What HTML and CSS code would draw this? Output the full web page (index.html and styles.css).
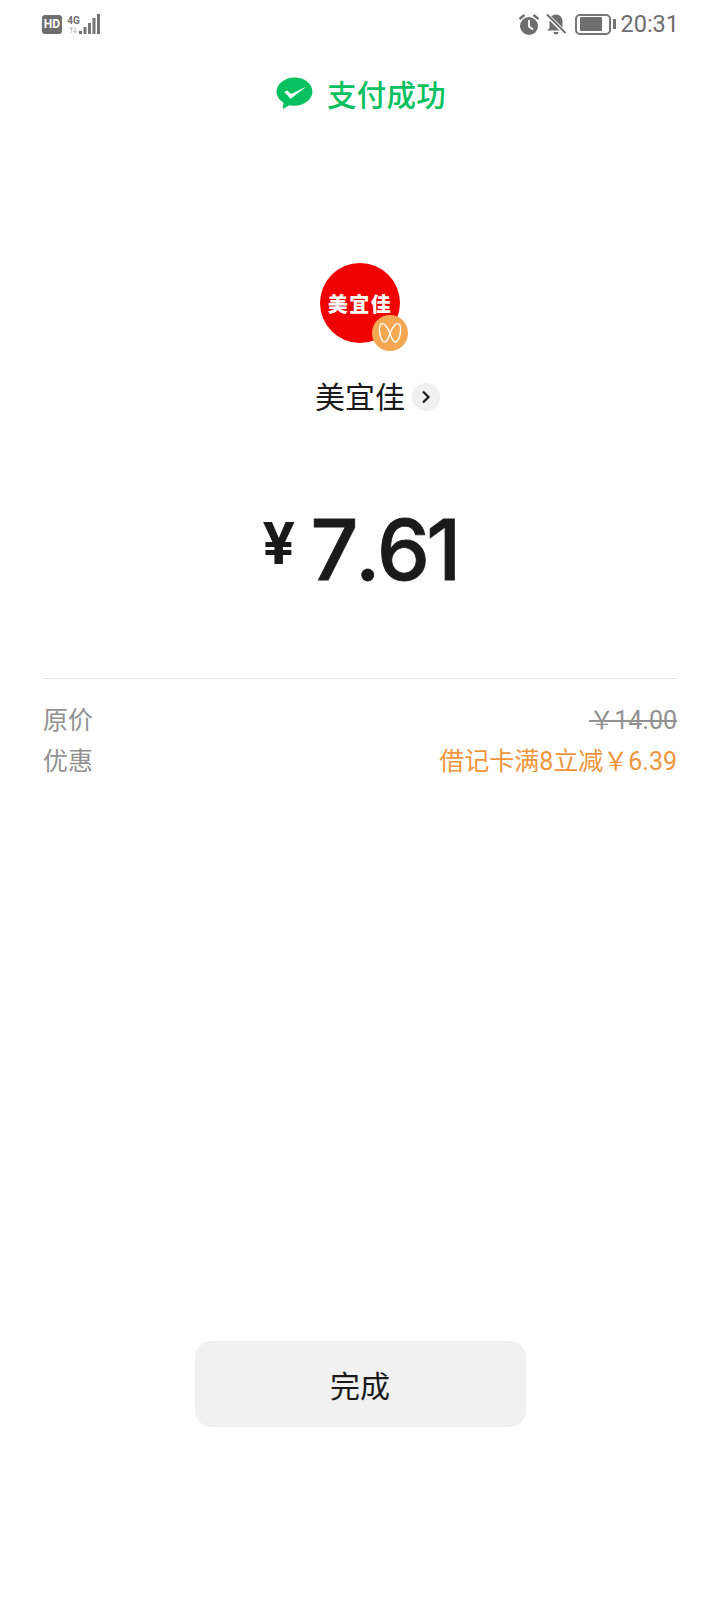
FILE: index.html
```html
<!DOCTYPE html>
<html lang="zh-CN">
<head>
    <meta charset="UTF-8">
    <title>支付成功</title>
    <meta name="viewport" content="width=device-width, initial-scale=1.0">
    <link rel="stylesheet" href="styles.css">
</head>
<body>
<div class="status-bar">
    <div class="status-left">
        <span class="hd-badge">HD</span>
        <div class="net">
            <span class="net-label">4G</span>
            <svg class="net-arrows" width="12" height="8" viewBox="0 0 12 8"><path d="M3 0.500v7M1 2.500l2-2 2 2M8 0.500v7M6 5.500l2 2 2-2" fill="none" stroke="#c4c4c4" stroke-width="1.400"/></svg>
        </div>
        <svg class="signal" width="21" height="21" viewBox="0 0 21 21">
            <rect x="0" y="17" width="3" height="3" fill="#757575"/>
            <rect x="4.500" y="13" width="3" height="7" fill="#757575"/>
            <rect x="9" y="9" width="3" height="11" fill="#757575"/>
            <rect x="13.500" y="4" width="3" height="16" fill="#757575"/>
            <rect x="18" y="0" width="3" height="20" fill="#757575"/>
        </svg>
    </div>
    <div class="status-right">
        <svg class="alarm" width="24" height="24" viewBox="0 0 24 24">
            <circle cx="12" cy="14" r="9" fill="#6e6e6e"/>
            <path d="M12 8v6.500l4 3" fill="none" stroke="#fff" stroke-width="1.800"/>
            <path d="M2.500 7l5-4M21.500 7l-5-4" stroke="#6e6e6e" stroke-width="2.400" fill="none"/>
        </svg>
        <svg width="24" height="24" viewBox="0 0 24 24">
            <path d="M12 2.500c-4 0-6.500 3-6.500 7v6.500l-2.500 2.500h18L18.500 16V9.500c0-4-2.500-7-6.500-7z" fill="#6e6e6e"/>
            <path d="M9.500 20h5c0 1.500-1 2.500-2.500 2.500s-2.500-1-2.500-2.500z" fill="#6e6e6e"/>
            <path d="M3 3l18 18" stroke="#fff" stroke-width="4"/>
            <path d="M3 2.500l18.500 18.500" stroke="#6e6e6e" stroke-width="1.800"/>
        </svg>
        <div class="battery">
            <div class="battery-body"><div class="battery-fill"></div></div>
            <div class="battery-cap"></div>
        </div>
        <span class="clock">20:31</span>
    </div>
</div>

<div class="result-head">
    <svg class="wx-icon" width="37" height="33" viewBox="0 0 38 34">
        <path d="M19 0.500C9 0.500 0.500 7 0.500 15c0 4.700 2.800 8.800 7.200 11.500L6.800 33l7-3.900c1.700 0.400 3.400 0.600 5.200 0.600 10 0 18.500-6.500 18.500-14.700S29 0.500 19 0.500z" fill="#07c160"/>
        <path d="M8.500 15.500l3-1.500 4 3.500L31 10 15 22.500z" fill="#fff"/>
    </svg>
    <span class="result-title">支付成功</span>
</div>

<div class="merchant">
    <div class="logo">
        <span class="logo-text">美宜佳</span>
        <span class="logo-badge">
            <svg width="26" height="26" viewBox="0 0 26 26">
                <path d="M13 13C10 6 6.500 2.500 4 4 1.500 6 2 15 5 20 7.500 24 10.500 22 13 13zM13 13c3-7 6.500-10.500 9-9 2.500 2 2 11-1 16-2.500 4-5.500 2-8-7z" fill="none" stroke="#fff" stroke-width="1.400"/>
            </svg>
        </span>
    </div>
    <div class="merchant-name">
        <span>美宜佳</span>
        <span class="chevron">
            <svg width="12" height="14" viewBox="0 0 12 14"><path d="M3 1.500L8.500 7 3 12.500" fill="none" stroke="#1a1a1a" stroke-width="2.200"/></svg>
        </span>
    </div>
</div>

<div class="amount">
    <span class="currency">¥</span>
    <span class="value">7.61</span>
</div>

<div class="details">
    <div class="row">
        <span class="row-label">原价</span>
        <span class="row-old">￥14.00</span>
    </div>
    <div class="row">
        <span class="row-label">优惠</span>
        <span class="row-discount">借记卡满8立减￥6.39</span>
    </div>
</div>

<div class="actions">
    <button class="done-btn">完成</button>
</div>
</body>
</html>
```

FILE: styles.css
```css
body {
    margin: 0;
    width: 720px;
    height: 1600px;
    overflow: hidden;
    background: #fff;
    font-family: Roboto, "Noto Sans CJK SC", sans-serif;
    color: #1a1a1a;
}

/* status bar */
.status-bar {
    display: flex;
    justify-content: space-between;
    align-items: center;
    height: 48px;
    padding: 0 41px 0 42px;
}

.status-left,
.status-right {
    display: flex;
    align-items: center;
}

.hd-badge {
    width: 20px;
    height: 19px;
    border-radius: 3px;
    background: #6e6e6e;
    color: #fff;
    font-size: 12px;
    font-weight: 700;
    line-height: 19px;
    text-align: center;
}

.net {
    display: flex;
    flex-direction: column;
    align-items: center;
    width: 11px;
    margin-left: 6px;
}

.net-label {
    color: #6e6e6e;
    font-size: 10px;
    font-weight: 700;
    line-height: 11px;
}

.net-arrows {
    width: 9px;
}

.status-right {
    gap: 5px;
}

.alarm {
    margin-right: -2px;
}

.battery {
    display: flex;
    align-items: center;
    margin-left: 2px;
}

.battery-body {
    box-sizing: border-box;
    width: 36px;
    height: 21px;
    padding: 1.500px 3px;
    border: 2px solid #757575;
    border-radius: 5px;
}

.battery-fill {
    width: 22px;
    height: 14px;
    background: #6e6e6e;
    border-radius: 1px;
}

.battery-cap {
    width: 3px;
    height: 10px;
    margin-left: 2px;
    background: #757575;
}

.clock {
    margin-left: -1px;
    color: #6e6e6e;
    font-size: 23.500px;
}

/* header */
.result-head {
    display: flex;
    justify-content: center;
    align-items: center;
    gap: 14px;
    height: 40px;
    margin-top: 26px;
    padding-left: 2px;
}

.wx-icon {
    margin-top: -2px;
}

.result-title {
    margin-top: -3px;
    color: #07c160;
    font-size: 29.500px;
    font-weight: 500;
    letter-spacing: 0.200px;
}

/* merchant */
.merchant {
    display: flex;
    flex-direction: column;
    align-items: center;
    margin-top: 149px;
}

.logo {
    position: relative;
    display: flex;
    justify-content: center;
    align-items: center;
    width: 80px;
    height: 80px;
    border-radius: 50%;
    background: #f00000;
}

.logo-text {
    color: #fff;
    font-size: 20px;
    font-weight: 900;
    white-space: nowrap;
    letter-spacing: 1.500px;
}

.logo-badge {
    position: absolute;
    right: -8px;
    bottom: -8px;
    display: flex;
    justify-content: center;
    align-items: center;
    width: 36px;
    height: 36px;
    border-radius: 50%;
    background: #f5a851;
}

/* name stays centred on the page, the chevron hangs off its right side */
.merchant-name {
    display: flex;
    align-items: center;
    gap: 7px;
    margin-top: 35px;
    padding-left: 35px;
    font-size: 30px;
    line-height: 40px;
}

.chevron {
    display: flex;
    justify-content: center;
    align-items: center;
    width: 28px;
    height: 28px;
    margin-top: -2px;
    border-radius: 50%;
    background: #f0f0f0;
}

/* amount */
.amount {
    display: flex;
    justify-content: center;
    align-items: flex-start;
    margin-top: 82px;
    font-family: Inter, sans-serif;
    line-height: 100px;
}

.currency {
    margin-top: -7px;
    font-size: 58px;
    font-weight: 700;
}

.value {
    margin-left: 15px;
    font-size: 84px;
    font-weight: 500;
    font-kerning: none;
    letter-spacing: -3.500px;
    -webkit-text-stroke: 0.800px #1a1a1a;
}

/* detail rows */
.details {
    margin: 78px 43px 0;
    padding-top: 18px;
    border-top: 1px solid #e5e5e5;
}

.row {
    display: flex;
    justify-content: space-between;
    align-items: center;
    height: 41px;
    font-size: 25px;
}

.row-label {
    color: #929292;
}

.row-old {
    color: #929292;
    text-decoration: line-through;
}

.row-discount {
    color: #f0953b;
}

/* bottom button */
.actions {
    display: flex;
    justify-content: center;
    margin-top: 562px;
}

.done-btn {
    width: 331px;
    height: 86px;
    padding: 0;
    border: 0;
    border-radius: 16px;
    background: #f1f1f1;
    color: #1a1a1a;
    font-family: inherit;
    font-size: 30px;
}
```
